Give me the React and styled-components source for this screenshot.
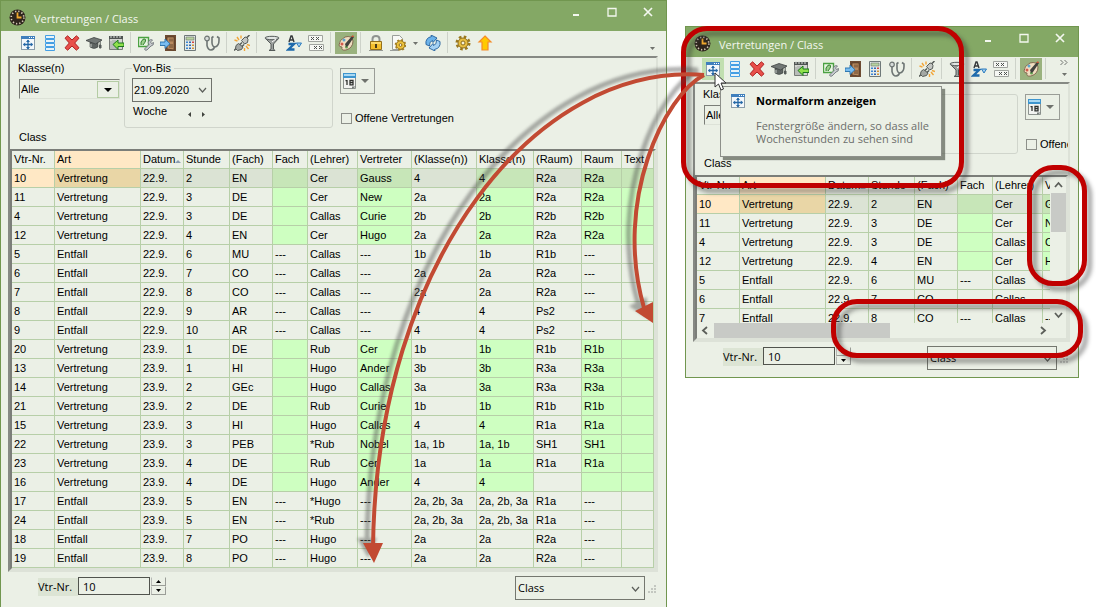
import { useId } from 'react';
import styled, { createGlobalStyle, css } from 'styled-components';

const GlobalStyle = createGlobalStyle`
  *, *::before, *::after {
    box-sizing: border-box;
  }

  body {
    margin: 0;
    background: #ffffff;
    color: #000000;
    font-family: 'Liberation Sans', Arial, sans-serif;
    font-size: 11px;
    line-height: 14px;
  }

  button, input, select {
    margin: 0;
    padding: 0;
    border: 0;
    border-radius: 0;
    background: none;
    color: inherit;
    font: inherit;
  }
`;

const uiFont = css`
  font-family: 'Open Sans', 'Noto Sans', sans-serif;
`;

const Desktop = styled.main`
  position: relative;
  display: grid;
  grid-template-columns: minmax(0, 667fr) minmax(0, 394fr);
  gap: 18px;
  align-items: start;
  padding-right: 17px;
  overflow: hidden;
`;

const Window = styled.section`
  position: relative;
  margin-top: ${({ $small }) => ($small ? '26px' : '0')};
  border: 1px solid #71964f;
  border-bottom-width: ${({ $small }) => ($small ? '1px' : '0')};
  background: #ebf0e6;
`;

const TitleBar = styled.header`
  display: flex;
  align-items: flex-start;
  height: 30px;
  padding-left: 8px;
  background: #84a865;
  color: #f3f7ef;
`;

const AppIcon = styled.svg`
  width: 17px;
  height: 17px;
  margin-top: 8px;
`;

const Title = styled.h1`
  ${uiFont}
  flex: 1;
  margin: 9px 0 0 8px;
  font-size: 11px;
  font-weight: 400;
  line-height: 18px;
`;

const CaptionButton = styled.button`
  display: flex;
  align-items: center;
  justify-content: center;
  width: 36px;
  height: 22px;
`;

const ToolBar = styled.div`
  display: flex;
  align-items: flex-start;
  height: 25px;
  padding: 1px 0 0 16px;
`;

const ToolButton = styled.button`
  display: flex;
  flex: none;
  align-items: center;
  justify-content: center;
  width: ${({ $narrow }) => ($narrow ? '13px' : '22px')};
  height: 22px;
  background: ${({ $state }) =>
    $state === 'pressed' ? '#9ab27e' : $state === 'hover' ? '#c1dfb0' : 'none'};
`;

const Separator = styled.span`
  flex: none;
  width: 1px;
  height: 21px;
  margin: 0 4px 0 3px;
  background: #cdd2c9;
`;

const Overflow = styled.button`
  display: flex;
  flex-direction: column;
  align-items: center;
  justify-content: flex-end;
  width: 14px;
  height: 18px;
  margin: 0 7px 0 auto;
`;

const Panel = styled.div`
  margin: 0 8px 0 7px;
  border: 2px solid;
  border-color: #868984 #dde2d8 #dde2d8 #868984;
`;

const Filter = styled.form`
  padding: 3px 8px 4px;
  overflow: hidden;
  white-space: nowrap;
`;

const FilterRow = styled.div`
  display: flex;
  height: 67px;
`;

const ClassField = styled.div`
  flex: none;
  width: 106px;
`;

const FieldLabel = styled.label`
  display: block;
  margin-bottom: 4px;
`;

const ComboBox = styled.div`
  position: relative;
  width: 101px;
  height: 20px;
  margin-left: 1px;
  border: 1px solid;
  border-color: #7b7e78 #dde2d8 #dde2d8 #7b7e78;
`;

const ComboSelect = styled.select`
  display: block;
  width: 100%;
  height: 17px;
  padding-left: 1px;
  appearance: none;
`;

const ComboArrow = styled.span`
  position: absolute;
  top: 1px;
  right: 0;
  display: flex;
  align-items: center;
  justify-content: center;
  width: 22px;
  height: 17px;
  border: 1px solid #b4cca4;
  pointer-events: none;
`;

const DateGroup = styled.fieldset`
  flex: none;
  width: 209px;
  min-width: 0;
  height: 67px;
  margin: 0;
  padding: 0 7px;
  border: 1px solid #d0d5cc;
  border-radius: 3px;
`;

const Legend = styled.legend`
  padding: 0 3px 0 1px;
`;

const DateBox = styled.div`
  display: flex;
  align-items: center;
  justify-content: space-between;
  width: 80px;
  height: 24px;
  margin-top: 3px;
  padding-right: 4px;
  border: 1px solid #6f726c;
`;

const DateInput = styled.input`
  width: 60px;
  height: 22px;
  padding-left: 1px;
`;

const DateButton = styled.button`
  display: flex;
`;

const WeekRow = styled.div`
  display: flex;
  align-items: center;
  height: 14px;
  margin-top: 2px;
  padding-left: 1px;
`;

const WeekLabel = styled.span`
  width: 49px;
`;

const WeekButton = styled.button`
  display: flex;
  align-items: center;
  justify-content: center;
  width: 14px;
  height: 14px;
  padding-top: 6px;
`;

const Options = styled.div`
  flex: none;
  margin-left: 7px;
  padding-top: 7px;
`;

const CalendarButton = styled.button`
  display: flex;
  align-items: center;
  gap: 4px;
  width: 35px;
  height: 26px;
  padding-left: 2px;
  border: 1px solid #9a9d97;
`;

const CheckLabel = styled.label`
  display: flex;
  align-items: center;
  gap: 3px;
  margin: 17px 0 0 1px;
`;

const CheckBox = styled.input`
  width: 11px;
  height: 11px;
  border: 1px solid #8d908a;
  appearance: none;
`;

const SectionName = styled.div`
  margin-top: 1px;
  padding-left: 1px;
  line-height: 16px;
`;

const TableFrame = styled.div`
  border: 2px solid;
  border-color: #7b7e79 #dde2d8 #dde2d8 #7b7e79;
`;

const ScrollArea = styled.div`
  display: flex;
`;

const Viewport = styled.div`
  flex: 1;
  min-width: 0;
  height: ${({ $small }) => ($small ? '146px' : 'auto')};
  overflow: hidden;
`;

const Table = styled.table`
  width: 642px;
  border-collapse: separate;
  border-spacing: 0;
  table-layout: fixed;
`;

const cell = css`
  padding: 0 0 0 2px;
  border-right: 1px solid #b7cfa8;
  border-bottom: 1px solid #b7cfa8;
  overflow: hidden;
  font-weight: 400;
  text-align: left;
  white-space: nowrap;
`;

const HeadCell = styled.th`
  ${cell}
  height: 18px;
  padding-bottom: 1px;
  background: ${({ $marked }) => ($marked ? '#ffe8c5' : 'none')};
`;

const tones = {
  green: '#ceffc1',
  greenActive: '#c7e6b8',
  active: '#dbe3d4',
  marked: '#ffe8c5',
  markedActive: '#e9d6a6',
};

const Cell = styled.td`
  ${cell}
  height: 19px;
  background: ${({ $tone }) => tones[$tone] || 'none'};
`;

const VerticalBar = styled.div`
  display: flex;
  flex: none;
  flex-direction: column;
  width: 16px;
  height: 146px;
`;

const VerticalThumb = styled.div`
  width: 15px;
  height: 39px;
  margin: 0 0 auto 1px;
  background: #c8cac6;
`;

const HorizontalBar = styled.div`
  display: flex;
  align-items: center;
  height: 15px;
  padding-right: 16px;
`;

const HorizontalThumb = styled.div`
  width: 176px;
  height: 15px;
  margin: 0 auto 0 1px;
  background: #c8cac6;
`;

const ScrollButton = styled.button`
  display: flex;
  flex: none;
  align-items: center;
  justify-content: center;
  width: 16px;
  height: 16px;
`;

const Footer = styled.footer`
  ${uiFont}
  display: flex;
  align-items: flex-start;
  height: 35px;
  padding: 4px 9px 0 37px;
`;

const NumberLabel = styled.label`
  width: 40px;
  margin-top: 2px;
  background: #dce4d4;
  line-height: 18px;
`;

const NumberInput = styled.input`
  width: 72px;
  height: 18px;
  margin-top: 1px;
  padding-left: 4px;
  border: 1px solid #50534d;
`;

const Spinner = styled.div`
  display: grid;
  grid-template-rows: 9px 9px;
  width: 15px;
  margin: 1px 0 0 1px;
`;

const SpinButton = styled.button`
  display: flex;
  align-items: center;
  justify-content: center;
  border: 1px solid;
  border-color: #ebf0e6 #9a9d97 #9a9d97 #b7b9b5;
`;

const ViewBox = styled.div`
  position: relative;
  width: 130px;
  height: 24px;
  margin-left: auto;
  border: 1px solid #74776f;
`;

const ViewSelect = styled.select`
  width: 100%;
  height: 22px;
  padding-left: 2px;
  appearance: none;
`;

const ViewArrow = styled.span`
  position: absolute;
  top: 8px;
  right: 4px;
  display: flex;
  pointer-events: none;
`;

const Grip = styled.svg`
  width: 9px;
  height: 9px;
  margin: 9px 0 0 3px;
`;

const Tooltip = styled.div`
  ${uiFont}
  position: absolute;
  top: 59px;
  left: 34px;
  display: grid;
  grid-template-columns: 16px 1fr;
  gap: 10px;
  width: 222px;
  height: 71px;
  padding: 6px 0 0 9px;
  border: 1px solid #8d908a;
  background: #ebf0e6;
  box-shadow: 3px 3px 1px rgba(90, 96, 84, 0.7);
`;

const TooltipTitle = styled.strong`
  display: block;
  font-weight: 700;
  line-height: 16px;
`;

const TooltipText = styled.p`
  margin: 10px 0 0;
  color: #6c6e6b;
  line-height: 13px;
  white-space: nowrap;
`;

const Cursor = styled.svg`
  position: absolute;
  top: 45px;
  left: 28px;
  width: 13px;
  height: 19px;
`;

const marks = {
  tooltip: css`
    top: -1px;
    left: -5px;
    width: 283px;
    height: 162px;
  `,
  vertical: css`
    top: 138px;
    right: -9px;
    width: 60px;
    height: 121px;
  `,
  horizontal: css`
    top: 272px;
    right: -5px;
    width: 252px;
    height: 59px;
  `,
};

const Mark = styled.div`
  position: absolute;
  border: 5px solid #c00000;
  border-radius: 26px;
  filter: drop-shadow(5px 5px 2px rgba(50, 50, 50, 0.45));
  pointer-events: none;
  ${({ $place }) => marks[$place]}
`;

const Arrows = styled.svg`
  position: absolute;
  top: 0;
  left: 0;
  width: 1096px;
  height: 607px;
  pointer-events: none;
`;

const icons = {
  normal: (
    <>
      <rect x="1.5" y="1.5" width="13" height="13" fill="#f4f8fb" stroke="#8b9daa" />
      <path d="M1 1h14v3H1z" fill="#3f7fbd" />
      <path d="M9 2h1v1H9zM11 2h1v1h-1zM13 2h1v1h-1z" fill="#fff" />
      <path d="M8 5v9M3.500 9.500h9" stroke="#2467a6" strokeWidth="1.300" />
      <path d="M8 4.500 6 7h4zM8 14.500 6 12h4zM3 9.500 5.200 7.500v4zM13 9.500 10.800 7.500v4z" fill="#2467a6" />
    </>
  ),
  list: (
    <path
      d="M3.500.500h9v3h-9zM3.500 4.500h9v3h-9zM3.500 8.500h9v3h-9zM3.500 12.500h9v3h-9z"
      fill="#e9f3f8"
      stroke="#459fe4"
    />
  ),
  remove: (
    <path
      d="m1 3.200 2.600-2.400L8 5l4.400-4.200L15 3.200 10.700 8l4.300 4.800-2.600 2.400L8 11l-4.400 4.200L1 12.800 5.300 8z"
      fill="#e8504b"
      stroke="#ae2222"
    />
  ),
  cap: (
    <>
      <path d="M4 7v5q4 3 8 0V7z" fill="#5e6462" stroke="#3d4342" strokeWidth=".6" />
      <path d="m0 5.500 8-3 8 2.500-6.500 4z" fill="#727876" stroke="#3d4342" strokeWidth=".8" />
      <path d="M14.200 6v4M13.500 10h1.500v3h-1.500z" stroke="#555b59" fill="#555b59" />
      <path d="M5 9v3" stroke="#c4c9c6" />
    </>
  ),
  insert: (
    <>
      <path d="M1.500 2.500h13v12h-13z" fill="#d4d6d2" stroke="#777b77" />
      <path d="M1 1h14v3H1z" fill="#4f5452" />
      <path d="M3 0v3M6 0v3M9 0v3M12 0v3" stroke="#d8dcd8" />
      <path d="M3 6v8M5 5v9M7 5v9" stroke="#9da29e" />
      <path d="m5 9.500 5-4.500v3h6v3.500h-6v3z" fill="#8fe04b" stroke="#19761d" />
    </>
  ),
  planTool: (
    <>
      <path d="M.5 2.500h10v9H.5z" fill="#eaf6e4" stroke="#4ba242" strokeWidth="1.400" />
      <path d="M3 10V7q2-4 4-3 2 1-2 6" fill="#9ccf8c" stroke="#33802f" />
      <path d="M11 5.500q2-1.500 3.500-.5L12.500 7l1 1.500 2-1q.5 3-2.500 3.500l-4 4q-2 1-2.500-1L11 9.500q-1.500-2 0-4z" fill="#c6cace" stroke="#70767c" strokeWidth=".9" />
    </>
  ),
  door: (
    <>
      <path d="M5 0h11v16H5z" fill="#6d4b32" />
      <path d="M7 2h7v13l-7-1z" fill="#b88a5f" stroke="#523622" strokeWidth=".7" />
      <path d="M9 3.500h4v3H9zM9 9h4v4H9z" fill="#8f6947" />
      <path d="M0 7h5V4l5 4.700-5 4.800v-3H0z" fill="#79bdf0" stroke="#246eaa" strokeWidth=".9" />
    </>
  ),
  calculator: (
    <>
      <path d="M2.500.5h11v15h-11z" fill="#e5ebe7" stroke="#6f7979" />
      <path d="M4 2h8v3H4z" fill="#b7d29f" stroke="#6b7771" strokeWidth=".6" />
      <path d="M4 6.500h2v1.500H4zM4 9.500h2V11H4zM4 12.500h2V14H4z" fill="#3d86d4" />
      <path d="M7 6.500h2v1.500H7zM7 9.500h2V11H7zM7 12.500h2V14H7z" fill="#3267b4" />
      <path d="M10 6.500h2v1.500h-2z" fill="#d34444" />
      <path d="M10 9.500h2V11h-2zM10 12.500h2V14h-2z" fill="#d19238" />
    </>
  ),
  stethoscope: (
    <>
      <path d="M9.500 1.500 8 2.500v5.500q.5 4 3 4 4-1 4-6.500V3l-2-1.500M3 5.500v5q1 4.500 4 4.500 3-.5 3.500-3" fill="none" stroke="#6e7674" strokeWidth="1.600" />
      <circle cx="3" cy="3.500" r="2.300" fill="#d7dcda" stroke="#6e7674" strokeWidth="1.200" />
    </>
  ),
  plug: (
    <>
      <path d="M7.500 5.500 11 2l2 .5 1 2-.5 3-3 1.500z" fill="#c3c6c2" stroke="#555a57" />
      <path d="m2 10.500 2.500-2L9 12l-1.500 2.500-4 1-2-2z" fill="#a4a8a4" stroke="#555a57" />
      <path d="m13 2.500 2.500-2.500M0 15.500l2-2M6 9.500l2-2M8 11.500l2-2" stroke="#555a57" strokeWidth="1.500" />
      <path d="m3 2 2 3M7 .5v3M.5 5l3 1M12 11l2.500 3M13 9.500l3 1M10.500 13v3" stroke="#f2a638" strokeWidth="1.400" />
    </>
  ),
  funnel: (
    <>
      <path d="m1 3 6 6v5l-2 1.500h6L9.500 14V9L15 3z" fill="#9ca19e" stroke="#555b59" />
      <ellipse cx="8" cy="3" rx="7" ry="1.700" fill="#e2e6e3" stroke="#555b59" />
      <path d="m8 7 4-3" stroke="#fff" />
    </>
  ),
  sort: (
    <>
      <path d="m3 7 2-6h1l2 6M4 5h3" fill="none" stroke="#36393b" strokeWidth="1.400" />
      <path d="M2.500 9h5.500l-5.500 5.500h6" fill="none" stroke="#1e6aac" strokeWidth="2.400" />
      <path d="M10.500 8h5l-2.500 4z" fill="#a5d0f2" stroke="#2b7bbd" />
    </>
  ),
  crosses: (
    <>
      <path d="M.5.500h14v6h-14zM1.500 9.500h14v6h-14z" fill="#f6f8f4" stroke="#a0a49f" />
      <path d="m3 2 3 3M6 2 3 5M8 2l3 3M11 2 8 5M6 11l3 3M9 11l-3 3M11 11l3 3M14 11l-3 3" stroke="#4b4f4c" />
    </>
  ),
  palette: (
    <>
      <path d="M1 10q0-5 6-8 7-2 8 4 0 7-7 9-5 1-4-3-3 0-3-2z" fill="#f0ddc0" stroke="#826b51" />
      <circle cx="4" cy="9" r="1.500" fill="#d35a4b" />
      <circle cx="6" cy="5" r="1.500" fill="#5da7cf" />
      <circle cx="8.500" cy="12" r="1.500" fill="#61a352" />
      <path d="m7 9 7-8 2 1-6 9-2 1z" fill="#42423e" />
      <path d="m13 2 2-2 1 2z" fill="#cf4f36" />
    </>
  ),
  lock: (
    <>
      <path d="M4.500 7V4q0-3 3.500-3t3.500 3v3" fill="none" stroke="#8f9390" strokeWidth="2" />
      <path d="M2.500 6.500h11v8h-11z" fill="#f4bf2c" stroke="#94701a" />
      <path d="M3 8h10" stroke="#ffe27c" strokeWidth="1.500" />
      <path d="M7 9h2v4H7z" fill="#4b3d1a" />
      <path d="M1 15.500h14" stroke="#979b96" />
    </>
  ),
  docGear: (
    <>
      <path d="M2.500.500h7l3 3v11h-10z" fill="#f8f9f7" stroke="#9a9e9a" />
      <path d="M0 15.500h9" stroke="#9a9e9a" />
      <circle cx="10.500" cy="10" r="4.300" fill="#edc23b" stroke="#8f6d17" />
      <circle cx="10.500" cy="10" r="5" fill="none" stroke="#a47f1e" strokeWidth="1.600" strokeDasharray="2 1.900" />
      <circle cx="10.500" cy="10" r="1.400" fill="#f8f9f7" stroke="#8f6d17" />
    </>
  ),
  refresh: (
    <>
      <path d="M1 9.500Q0 3 6.500 1.500L6 0l6 3-4 4.500-.5-2Q4 6.500 4.500 11z" fill="#6cb3ea" stroke="#215f9c" strokeWidth=".9" />
      <path d="M15 6.500q1 6.500-5.500 8l.5 1.500-6-3L8 8.500l.5 2Q12 9.500 11.500 5z" fill="#a5d2f5" stroke="#215f9c" strokeWidth=".9" />
    </>
  ),
  gear: (
    <>
      <circle cx="8" cy="8" r="6.300" fill="none" stroke="#9b781e" strokeWidth="2.400" strokeDasharray="2.600 2.348" />
      <circle cx="8" cy="8" r="5" fill="#e8be42" stroke="#8f6d17" />
      <circle cx="8" cy="8" r="2" fill="#f5f0d8" stroke="#8f6d17" />
    </>
  ),
  up: <path d="m8 1 6 6h-3v8H5V7H2z" fill="#ffca00" stroke="#f58b28" strokeWidth="1.200" />,
};

const tools = [
  { icon: 'normal', label: 'Normalform anzeigen' },
  { icon: 'list', label: 'Liste' },
  { icon: 'remove', label: 'Löschen' },
  { icon: 'cap', label: 'Schüler' },
  { icon: 'insert', label: 'Einfügen' },
  null,
  { icon: 'planTool', label: 'Planung' },
  { icon: 'door', label: 'Raum' },
  { icon: 'calculator', label: 'Rechner' },
  { icon: 'stethoscope', label: 'Diagnose' },
  null,
  { icon: 'plug', label: 'Verbindung' },
  null,
  { icon: 'funnel', label: 'Filter' },
  { icon: 'sort', label: 'Sortieren' },
  { icon: 'crosses', label: 'Markieren' },
  null,
  { icon: 'palette', label: 'Farben', state: 'pressed' },
  null,
  { icon: 'lock', label: 'Sperren' },
  { icon: 'docGear', label: 'Seite einrichten' },
  { icon: 'caret', label: 'Mehr', narrow: true },
  { icon: 'refresh', label: 'Aktualisieren' },
  null,
  { icon: 'gear', label: 'Einstellungen' },
  { icon: 'up', label: 'Nach oben' },
];

const columns = [
  ['Vtr-Nr.', 43],
  ['Art', 86],
  ['Datum', 43],
  ['Stunde', 46],
  ['(Fach)', 43],
  ['Fach', 35],
  ['(Lehrer)', 50],
  ['Vertreter', 54],
  ['(Klasse(n))', 65],
  ['Klasse(n)', 57],
  ['(Raum)', 48],
  ['Raum', 40],
  ['Text', 32],
];

const substitutions = [
  ['10', 'Vertretung', '22.9.', '2', 'EN', '', 'Cer', 'Gauss', '4', '4', 'R2a', 'R2a', ''],
  ['11', 'Vertretung', '22.9.', '3', 'DE', '', 'Cer', 'New', '2a', '2a', 'R2a', 'R2a', ''],
  ['4', 'Vertretung', '22.9.', '3', 'DE', '', 'Callas', 'Curie', '2b', '2b', 'R2b', 'R2b', ''],
  ['12', 'Vertretung', '22.9.', '4', 'EN', '', 'Cer', 'Hugo', '2a', '2a', 'R2a', 'R2a', ''],
  ['5', 'Entfall', '22.9.', '6', 'MU', '---', 'Callas', '---', '1b', '1b', 'R1b', '---', ''],
  ['6', 'Entfall', '22.9.', '7', 'CO', '---', 'Callas', '---', '2a', '2a', 'R2a', '---', ''],
  ['7', 'Entfall', '22.9.', '8', 'CO', '---', 'Callas', '---', '2a', '2a', 'R2a', '---', ''],
  ['8', 'Entfall', '22.9.', '9', 'AR', '---', 'Callas', '---', '4', '4', 'Ps2', '---', ''],
  ['9', 'Entfall', '22.9.', '10', 'AR', '---', 'Callas', '---', '4', '4', 'Ps2', '---', ''],
  ['20', 'Vertretung', '23.9.', '1', 'DE', '', 'Rub', 'Cer', '1b', '1b', 'R1b', 'R1b', ''],
  ['13', 'Vertretung', '23.9.', '1', 'HI', '', 'Hugo', 'Ander', '3b', '3b', 'R3a', 'R3a', ''],
  ['14', 'Vertretung', '23.9.', '2', 'GEc', '', 'Hugo', 'Callas', '3a', '3a', 'R3a', 'R3a', ''],
  ['21', 'Vertretung', '23.9.', '2', 'DE', '', 'Rub', 'Curie', '1b', '1b', 'R1b', 'R1b', ''],
  ['15', 'Vertretung', '23.9.', '3', 'HI', '', 'Hugo', 'Callas', '4', '4', 'R1a', 'R1a', ''],
  ['22', 'Vertretung', '23.9.', '3', 'PEB', '', '*Rub', 'Nobel', '1a, 1b', '1a, 1b', 'SH1', 'SH1', ''],
  ['23', 'Vertretung', '23.9.', '4', 'DE', '', 'Rub', 'Cer', '1a', '1a', 'R1a', 'R1a', ''],
  ['16', 'Vertretung', '23.9.', '4', 'DE', '', 'Hugo', 'Ander', '4', '4', '', '', ''],
  ['17', 'Entfall', '23.9.', '5', 'EN', '---', '*Hugo', '---', '2a, 2b, 3a', '2a, 2b, 3a', 'R1a', '---', ''],
  ['24', 'Entfall', '23.9.', '5', 'EN', '---', '*Rub', '---', '2a, 2b, 3a', '2a, 2b, 3a', 'R1a', '---', ''],
  ['18', 'Entfall', '23.9.', '7', 'PO', '---', 'Hugo', '---', '2a', '2a', 'R2a', '---', ''],
  ['19', 'Entfall', '23.9.', '8', 'PO', '---', 'Hugo', '---', '2a', '2a', 'R2a', '---', ''],
];

// columns that hold the substituted value
const greenColumns = [5, 7, 9, 11, 12];

function getTone(row, rowIndex, columnIndex) {
  const green = row[1] === 'Vertretung' && greenColumns.includes(columnIndex);
  if (rowIndex > 0) return green ? 'green' : undefined;
  if (columnIndex === 0) return 'marked';
  if (columnIndex === 1) return 'markedActive';
  return green ? 'greenActive' : 'active';
}

function Icon({ name }) {
  return (
    <svg width="16" height="16" viewBox="0 0 16 16" aria-hidden="true">
      {icons[name]}
    </svg>
  );
}

function Caret({ color = '#6f726d', size = 5, up }) {
  const height = Math.ceil(size / 2);
  return (
    <svg width={size} height={height} viewBox="0 0 10 6" preserveAspectRatio="none" aria-hidden="true">
      <path d={up ? 'M0 6h10L5 0z' : 'M0 0h10L5 6z'} fill={color} />
    </svg>
  );
}

const chevrons = {
  up: 'm1 6 3.500-4L8 6',
  down: 'm1 2 3.500 4L8 2',
  left: 'M6 1 2 4.500 6 8',
  right: 'm3 1 4 3.500L3 8',
};

function Chevron({ direction, thin }) {
  return (
    <svg width="9" height="9" viewBox="0 0 9 9" aria-hidden="true">
      <path d={chevrons[direction]} fill="none" stroke="#5c5f5a" strokeWidth={thin ? 1.2 : 1.8} />
    </svg>
  );
}

function WindowTitle() {
  return (
    <TitleBar>
      <AppIcon viewBox="0 0 17 17" aria-hidden="true">
        <circle cx="8.500" cy="8.500" r="8" fill="#2e251d" />
        <circle cx="8.500" cy="8.500" r="6.300" fill="none" stroke="#d9cdb9" strokeWidth="1.600" strokeDasharray="1.300 2" />
        <path d="M8.500 3.500v5H12.500" fill="none" stroke="#f1a92f" strokeWidth="1.800" />
      </AppIcon>
      <Title>Vertretungen / Class</Title>
      <CaptionButton aria-label="Minimieren">
        <svg width="10" height="10" viewBox="0 0 10 10">
          <path d="M2 7h6v2H2z" fill="#f3f7ef" />
        </svg>
      </CaptionButton>
      <CaptionButton aria-label="Maximieren">
        <svg width="10" height="10" viewBox="0 0 10 10">
          <path d="M1 1.500h8v7.500H1z" fill="none" stroke="#f3f7ef" strokeWidth="1.300" />
        </svg>
      </CaptionButton>
      <CaptionButton aria-label="Schließen">
        <svg width="10" height="10" viewBox="0 0 10 10">
          <path d="m1 1 8 8M9 1 1 9" stroke="#f3f7ef" strokeWidth="1.700" />
        </svg>
      </CaptionButton>
    </TitleBar>
  );
}

function WindowTools({ small }) {
  const visible = small ? tools.slice(0, 19) : tools;
  return (
    <ToolBar>
      {visible.map((tool, index) =>
        tool ? (
          <ToolButton
            key={index}
            aria-label={tool.label}
            $narrow={tool.narrow}
            $state={small && index === 0 ? 'hover' : tool.state}
          >
            {tool.icon === 'caret' ? <Caret /> : <Icon name={tool.icon} />}
          </ToolButton>
        ) : (
          <Separator key={index} />
        )
      )}
      <Overflow aria-label="Weitere Symbole">
        {small && (
          <svg width="8" height="14" viewBox="0 0 8 14">
            <path d="m.5 1 2.500 2.500L.5 6M4.500 1 7 3.500 4.500 6" fill="none" stroke="#6f726d" />
          </svg>
        )}
        <Caret />
      </Overflow>
    </ToolBar>
  );
}

function FilterBar() {
  const id = useId();
  return (
    <Filter>
      <FilterRow>
        <ClassField>
          <FieldLabel htmlFor={`${id}-klasse`}>Klasse(n)</FieldLabel>
          <ComboBox>
            <ComboSelect id={`${id}-klasse`}>
              <option>Alle</option>
            </ComboSelect>
            <ComboArrow>
              <Caret size={8} color="#000000" />
            </ComboArrow>
          </ComboBox>
        </ClassField>
        <DateGroup>
          <Legend>Von-Bis</Legend>
          <DateBox>
            <DateInput aria-label="Von-Bis" defaultValue="21.09.2020" />
            <DateButton type="button" aria-label="Kalender öffnen">
              <Chevron direction="down" thin />
            </DateButton>
          </DateBox>
          <WeekRow>
            <WeekLabel>Woche</WeekLabel>
            <WeekButton type="button" aria-label="Vorige Woche">
              <svg width="3" height="5" viewBox="0 0 3 5">
                <path d="M3 0v5L0 2.500z" fill="#3f423d" />
              </svg>
            </WeekButton>
            <WeekButton type="button" aria-label="Nächste Woche">
              <svg width="3" height="5" viewBox="0 0 3 5">
                <path d="M0 0v5l3-2.500z" fill="#3f423d" />
              </svg>
            </WeekButton>
          </WeekRow>
        </DateGroup>
        <Options>
          <CalendarButton type="button" aria-label="Kalender">
            <svg width="14" height="16" viewBox="0 0 14 16">
              <path d="M.5.500h12v15H.5z" fill="#f2f3f1" stroke="#8d938f" />
              <path d="M0 0h13v5H0z" fill="#3e95ce" />
              <path d="M1 1h11v2H1z" fill="#a9d8f2" />
              <path d="M2.500 7.700H4V12M7 7.500h3v4.300H7zM7 9.700h3" fill="none" stroke="#2d302e" strokeWidth="1.300" />
              <path d="M9 16v-2.500h4z" fill="#777d79" />
            </svg>
            <Caret size={8} />
          </CalendarButton>
          <CheckLabel>
            <CheckBox type="checkbox" />
            Offene Vertretungen
          </CheckLabel>
        </Options>
      </FilterRow>
      <SectionName>Class</SectionName>
    </Filter>
  );
}

function SubstitutionTable({ rows }) {
  return (
    <Table>
      <colgroup>
        {columns.map(([name, width]) => (
          <col key={name} width={width} />
        ))}
      </colgroup>
      <thead>
        <tr>
          {columns.map(([name]) => (
            <HeadCell key={name} scope="col" $marked={name === 'Art'}>
              {name}
              {name === 'Datum' && <Caret up color="#8c9caf" size={6} />}
            </HeadCell>
          ))}
        </tr>
      </thead>
      <tbody>
        {rows.map((row, rowIndex) => (
          <tr key={row[0]}>
            {row.map((value, columnIndex) => (
              <Cell key={columnIndex} $tone={getTone(row, rowIndex, columnIndex)}>
                {value}
              </Cell>
            ))}
          </tr>
        ))}
      </tbody>
    </Table>
  );
}

function WindowFooter() {
  const id = useId();
  return (
    <Footer>
      <NumberLabel htmlFor={id}>Vtr-Nr.</NumberLabel>
      <NumberInput id={id} defaultValue="10" />
      <Spinner>
        <SpinButton aria-label="Erhöhen">
          <Caret up color="#000000" />
        </SpinButton>
        <SpinButton aria-label="Verringern">
          <Caret color="#000000" />
        </SpinButton>
      </Spinner>
      <ViewBox>
        <ViewSelect aria-label="Ansicht">
          <option>Class</option>
        </ViewSelect>
        <ViewArrow>
          <Chevron direction="down" thin />
        </ViewArrow>
      </ViewBox>
      <Grip viewBox="0 0 9 9" aria-hidden="true">
        <path d="M6 0h2v2H6zM3 3h2v2H3zM6 3h2v2H6zM0 6h2v2H0zM3 6h2v2H3zM6 6h2v2H6z" fill="#c3c7c0" />
      </Grip>
    </Footer>
  );
}

function SubstitutionWindow({ small, children }) {
  return (
    <Window $small={small}>
      <WindowTitle />
      <WindowTools small={small} />
      <Panel>
        <FilterBar />
        <TableFrame>
          <ScrollArea>
            <Viewport $small={small}>
              <SubstitutionTable rows={small ? substitutions.slice(0, 7) : substitutions} />
            </Viewport>
            {small && (
              <VerticalBar>
                <ScrollButton aria-label="Nach oben scrollen">
                  <Chevron direction="up" />
                </ScrollButton>
                <VerticalThumb />
                <ScrollButton aria-label="Nach unten scrollen">
                  <Chevron direction="down" />
                </ScrollButton>
              </VerticalBar>
            )}
          </ScrollArea>
          {small && (
            <HorizontalBar>
              <ScrollButton aria-label="Nach links scrollen">
                <Chevron direction="left" />
              </ScrollButton>
              <HorizontalThumb />
              <ScrollButton aria-label="Nach rechts scrollen">
                <Chevron direction="right" />
              </ScrollButton>
            </HorizontalBar>
          )}
        </TableFrame>
      </Panel>
      <WindowFooter />
      {children}
    </Window>
  );
}

function ArrowShapes({ width }) {
  return (
    <>
      <path
        d="M704 75C538 62 376 258 373 548M704 75C665 95 613 200 644 308"
        fill="none"
        strokeWidth={width}
      />
      <path d="M363 543h20l-9 20zM635 311l18-9v21z" stroke="none" />
    </>
  );
}

export default function App() {
  return (
    <>
      <GlobalStyle />
      <Desktop>
        <SubstitutionWindow />
        <SubstitutionWindow small>
          <Tooltip role="tooltip">
            <Icon name="normal" />
            <div>
              <TooltipTitle>Normalform anzeigen</TooltipTitle>
              <TooltipText>
                Fenstergröße ändern, so dass alle
                <br />
                Wochenstunden zu sehen sind
              </TooltipText>
            </div>
          </Tooltip>
          <Mark $place="tooltip" />
          <Mark $place="vertical" />
          <Mark $place="horizontal" />
          <Cursor viewBox="0 0 13 19" aria-hidden="true">
            <path d="M1 1v14l3.500-3 2.500 6 2.500-1L7 11h5z" fill="#ffffff" stroke="#333333" />
          </Cursor>
        </SubstitutionWindow>
        <Arrows viewBox="0 0 1096 607" aria-hidden="true">
          <defs>
            <filter id="soft">
              <feGaussianBlur stdDeviation="1.5" />
            </filter>
          </defs>
          <g transform="translate(-6 -5)" fill="#444444" stroke="#444444" opacity="0.42" filter="url(#soft)">
            <ArrowShapes width="5" />
          </g>
          <g fill="#c24a33" stroke="#c24a33">
            <ArrowShapes width="4" />
          </g>
        </Arrows>
      </Desktop>
    </>
  );
}
